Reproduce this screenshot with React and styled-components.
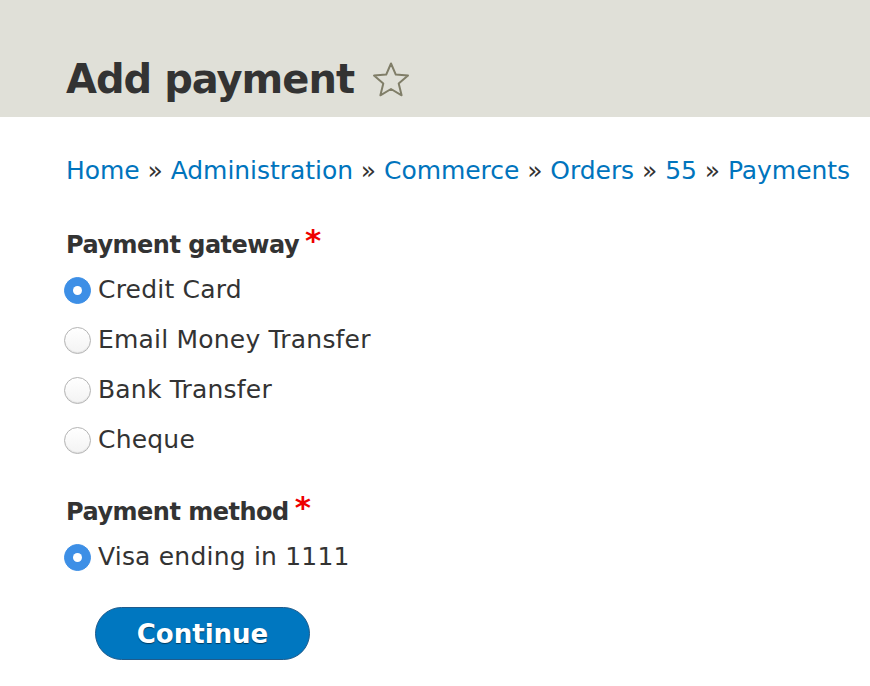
import styled, { createGlobalStyle } from 'styled-components'

const GlobalStyle = createGlobalStyle`
  html, body {
    margin: 0;
    padding: 0;
    background: #fff;
  }
  body {
    font-family: 'DejaVu Sans', 'Liberation Sans', sans-serif;
    color: #333;
  }
`

const gateways = [
  { id: 'credit', label: 'Credit Card', checked: true },
  { id: 'email', label: 'Email Money Transfer' },
  { id: 'bank', label: 'Bank Transfer' },
  { id: 'cheque', label: 'Cheque' }
]

const crumbs = ['Home', 'Administration', 'Commerce', 'Orders', '55', 'Payments']

const StarIcon = () => (
  <svg width='40' height='37' viewBox='0 0 40 37'>
    <path
      d='M20 2.5 L24.8 13.6 L37 14.6 L27.7 22.5 L30.6 34.3 L20 28 L9.4 34.3 L12.3 22.5 L3 14.6 L15.2 13.6 Z'
      fill='none'
      stroke='#807e68'
      strokeWidth='2'
      strokeLinejoin='round'
    />
  </svg>
)

const Radio = ({ checked }) => (
  <RadioCircle $checked={checked}>{checked && <RadioDot />}</RadioCircle>
)

const App = () => {
  return (
    <>
      <GlobalStyle />
      <Header>
        <Title>
          Add payment
          <StarWrap>
            <StarIcon />
          </StarWrap>
        </Title>
      </Header>
      <Content>
        <Breadcrumb>
          {crumbs.map((c, i) => (
            <span key={c}>
              <a href='#'>{c}</a>
              {i < crumbs.length - 1 && <Sep> » </Sep>}
            </span>
          ))}
        </Breadcrumb>

        <FieldLabel>
          Payment gateway <Req>*</Req>
        </FieldLabel>
        <RadioList>
          {gateways.map(g => (
            <RadioRow key={g.id}>
              <Radio checked={g.checked} />
              {g.label}
            </RadioRow>
          ))}
        </RadioList>

        <FieldLabel $method>
          Payment method <Req>*</Req>
        </FieldLabel>
        <RadioList>
          <RadioRow>
            <Radio checked />
            Visa ending in 1111
          </RadioRow>
        </RadioList>

        <Actions>
          <Button>Continue</Button>
        </Actions>
      </Content>
    </>
  )
}

export default App

const Header = styled.div`
  background: #e0e0d8;
  height: 117px;
  box-sizing: border-box;
  padding: 55px 0 0 66px;
`
const Title = styled.h1`
  margin: 0;
  display: flex;
  align-items: center;
  font-size: 40px;
  line-height: 48px;
  font-weight: 700;
  color: #333;
  letter-spacing: -1px;
`
const StarWrap = styled.span`
  display: inline-flex;
  margin-left: 17px;
  margin-top: 0;
`
const Content = styled.div`
  padding: 0 0 0 64px;
`
const Breadcrumb = styled.div`
  margin-top: 36px;
  padding-left: 2px;
  font-size: 25px;
  line-height: 36px;
  letter-spacing: -0.05px;
  white-space: nowrap;
  a {
    color: #0074bd;
    text-decoration: none;
  }
`
const Sep = styled.span`
  color: #333;
`
const FieldLabel = styled.div`
  margin-top: ${({ $method }) => ($method ? '36px' : '38px')};
  padding-left: 2px;
  font-size: 24px;
  line-height: 36px;
  font-weight: 700;
  letter-spacing: -0.5px;
  color: #333;
`
const Req = styled.span`
  color: #e00;
  font-size: 31px;
  line-height: 20px;
  position: relative;
  top: -2px;
  margin-left: -2px;
`
const RadioList = styled.div`
  display: flex;
  flex-direction: column;
  gap: 14px;
  margin-top: 9px;
`
const RadioRow = styled.label`
  display: flex;
  align-items: center;
  gap: 7px;
  font-size: 25px;
  line-height: 36px;
  letter-spacing: 0.2px;
  color: #333;
`
const RadioCircle = styled.span`
  width: 27px;
  height: 27px;
  flex: none;
  box-sizing: border-box;
  border-radius: 50%;
  display: flex;
  align-items: center;
  justify-content: center;
  background: ${({ $checked }) =>
    $checked ? '#3d8fe6' : 'linear-gradient(#fff, #f3f3f3)'};
  border: 1px solid ${({ $checked }) => ($checked ? '#3d8fe6' : '#b4b4b4')};
  box-shadow: ${({ $checked }) =>
    $checked ? 'none' : 'inset 0 -1px 1px rgba(0,0,0,0.08)'};
`
const RadioDot = styled.span`
  width: 9px;
  height: 9px;
  border-radius: 50%;
  background: #fff;
`
const Actions = styled.div`
  margin-top: 32px;
  padding-left: 31px;
`
const Button = styled.button`
  width: 215px;
  height: 53px;
  border-radius: 27px;
  border: 1px solid #1f5b8c;
  background: #0077c0;
  color: #fff;
  font-family: 'DejaVu Sans', 'Liberation Sans', sans-serif;
  font-size: 26px;
  font-weight: 700;
  text-shadow: 0 1px 1px rgba(0, 0, 0, 0.5);
  cursor: pointer;
`
